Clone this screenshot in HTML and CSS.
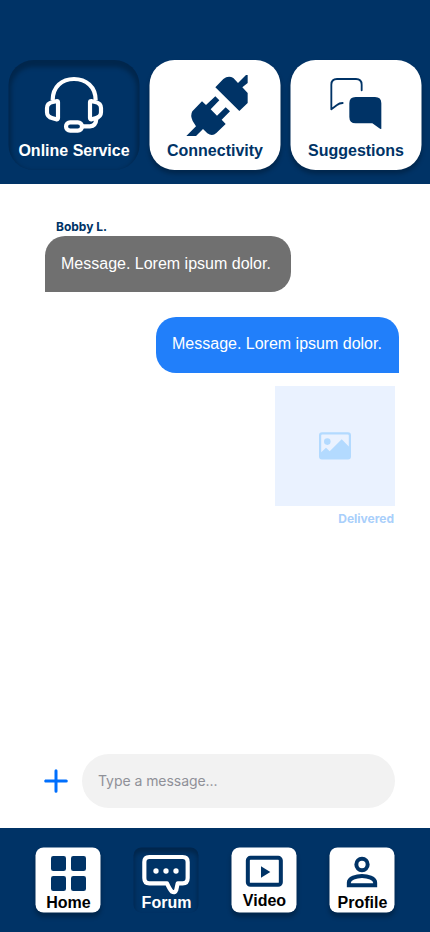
FILE: index.html
```html
<!DOCTYPE html>
<html lang="en">
<head>
<meta charset="utf-8">
<title>Online Service</title>
<link rel="stylesheet" href="styles.css">
</head>
<body>
<header class="topics">
  <a class="topic topic-active">
    <svg class="topic-icon" viewBox="25.5 30 393 246" fill="none" stroke="#fff" stroke-width="12.500" stroke-linejoin="round">
      <path d="M158 151C158 110 186 87 222 87S287 110 287 151"/>
      <path d="M172 153L158 156Q141 160 141 174V187Q141 201 158 205L169 208Q174 209 174 204V157Q174 153 170 153Z"/>
      <path d="M273 153L286 156Q303 160 303 174V187Q303 201 286 205L275 208Q270 209 270 204V157Q270 153 274 153Z"/>
      <rect x="198" y="217" width="48" height="25" rx="12.5"/>
      <path d="M248 229H270Q288 228 289 206"/>
    </svg>
    <span>Online Service</span>
  </a>
  <a class="topic">
    <svg class="topic-icon" viewBox="13.5 30 393 246" fill="#003366">
      <path d="M211 112L235 87Q250 75 265 84L279 99L303 75H308V99L292 112L308 129V159L283 183Z"/>
      <path d="M124 258L153 229L143 213Q135 196 142 184L171 154L183 165L211 139L223 151L197 178L216 197L242 172L255 184L230 209L242 222L214 249Q202 260 187 250L174 237L153 258Z"/>
    </svg>
    <span>Connectivity</span>
  </a>
  <a class="topic">
    <svg class="topic-icon" viewBox="16.5 30 393 246" fill="none" stroke="#003366" stroke-width="5.500" stroke-linecap="round" stroke-linejoin="round">
      <path d="M230 121V104Q230 87 213 87H156Q139 87 139 104V178L156 165Q163 159 173 159"/>
      <path d="M212 141H270Q289 141 289 160V236Q287 238 283 235L262 220H212Q193 220 193 201V160Q193 141 212 141Z" fill="#003366" stroke="none"/>
    </svg>
    <span>Suggestions</span>
  </a>
</header>
<main class="chat">
  <div class="sender">Bobby L.</div>
  <div class="bubble bubble-in">Message. Lorem ipsum dolor.</div>
  <div class="bubble bubble-out">Message. Lorem ipsum dolor.</div>
  <div class="photo">
    <svg width="32" height="28" viewBox="0 0 32 28">
      <path fill="#b3daff" fill-rule="evenodd" d="M3 .3H29Q32 .3 32 3.300V24.500Q32 27.500 29 27.500H3Q0 27.500 0 24.500V3.300Q0 .3 3 .3ZM3.200 2.600Q2.200 2.600 2.200 3.600V20.300L7 15.700L10.700 19.300L22.700 7.300L29.800 14.500V3.600Q29.800 2.600 28.800 2.600Z"/>
      <circle cx="8.300" cy="9.600" r="3.300" fill="#b3daff"/>
    </svg>
  </div>
  <div class="status">Delivered</div>
  <form class="composer">
    <svg width="24" height="24" viewBox="0 0 24 24" stroke="#006ffd" stroke-width="3" stroke-linecap="round"><path d="M12 1.700V22.300M1.700 12H22.300"/></svg>
    <input class="field" type="text" placeholder="Type a message..." aria-label="Message">
  </form>
</main>
<nav class="tabs">
  <a class="tab">
    <svg class="tab-icon" viewBox="46.5 82.5 195 138" fill="#003366">
      <rect x="93" y="108" width="45" height="45" rx="7"/><rect x="153" y="108" width="45" height="45" rx="7"/>
      <rect x="93" y="168" width="45" height="45" rx="7"/><rect x="153" y="168" width="45" height="45" rx="7"/>
    </svg>
    <span>Home</span>
  </a>
  <a class="tab tab-active">
    <svg class="tab-icon" viewBox="340.5 82.5 195 138" fill="none" stroke="#fff" stroke-width="12.500" stroke-linejoin="round">
      <path d="M388 111H488Q503 111 503 126V174Q503 190 488 190H473L469 209Q465 220 456 215Q449 208 441 190H388Q373 190 373 174V126Q373 111 388 111Z"/>
      <g fill="#fff" stroke="none"><circle cx="408" cy="153" r="8"/><circle cx="438" cy="153" r="8"/><circle cx="468" cy="153" r="8"/></g>
    </svg>
    <span>Forum</span>
  </a>
  <a class="tab tab-video">
    <svg class="tab-icon" viewBox="49.5 82.5 195 138" fill="#003366">
      <rect x="98.500" y="113.500" width="99" height="81" rx="8" fill="none" stroke="#003366" stroke-width="12"/>
      <path d="M138 139L166 156L138 173Z"/>
    </svg>
    <span>Video</span>
  </a>
  <a class="tab">
    <svg class="tab-icon" viewBox="343.5 82.5 195 138" fill="none" stroke="#003366" stroke-width="12">
      <circle cx="441" cy="133.500" r="17"/>
      <path d="M401.500 195.500V188C401.500 175 424 168 441 168S480.500 175 480.500 188V195.500Z"/>
    </svg>
    <span>Profile</span>
  </a>
</nav>
</body>
</html>
```
FILE: styles.css
```css
* {
  box-sizing: border-box;
}

body {
  margin: 0;
  width: 430px;
  height: 932px;
  display: flex;
  flex-direction: column;
  overflow: hidden;
  background: #fff;
  font-family: "Liberation Sans", Arial, sans-serif;
  font-size: 16px;
  line-height: 18px;
}

svg {
  display: block;
  flex: none;
  overflow: visible;
}

.topics {
  height: 184px;
  flex: none;
  display: flex;
  gap: 10px;
  padding: 60px 0 0 9px;
  background: #003366;
}

.topic {
  flex: none;
  width: 131px;
  height: 110px;
  border-radius: 25px;
  background: #fff;
  color: #003366;
  font-weight: 700;
  text-align: center;
  white-space: nowrap;
  box-shadow: 0 4px 4px rgba(0, 0, 0, 0.25);
  transform: translateX(-0.5px);
}

.topic-icon {
  width: 131px;
  height: 82px;
}

.topic-active {
  background: #003366;
  color: #fff;
  box-shadow: inset 0 4px 4px 3px rgba(0, 0, 0, 0.25);
}

.chat {
  height: 644px;
  flex: none;
  display: flex;
  flex-direction: column;
  padding: 35px 35px 20px 45px;
}

.sender {
  height: 17px;
  padding-left: 11px;
  font: 700 12px/16px Inter, sans-serif;
  color: #003366;
}

.bubble {
  height: 56px;
  padding: 19px 16px;
  color: #fff;
}

.bubble-in {
  width: 246px;
  border-radius: 20px 20px 20px 0;
  background: #707070;
}

.bubble-out {
  align-self: flex-end;
  width: 243px;
  margin: 25px -4px 0 0;
  border-radius: 20px 20px 0 20px;
  background: #217ffa;
  padding-top: 18px;
}

.photo {
  align-self: flex-end;
  width: 120px;
  height: 120px;
  margin-top: 13px;
  display: grid;
  place-items: center;
  background: #eaf2ff;
}

.status {
  align-self: flex-end;
  margin: 5px 1px 0 0;
  font: 700 12px/16px Inter, sans-serif;
  color: #a9cffb;
}

.composer {
  margin-top: auto;
  margin-left: -1px;
  display: flex;
  align-items: center;
  gap: 14px;
}

.field {
  width: 313px;
  height: 54px;
  padding: 0 16px 2px;
  border: 0;
  border-radius: 27px;
  background: #f2f2f2;
  font: 400 14px/20px Inter, sans-serif;
  letter-spacing: -0.05px;
}

.field::placeholder {
  color: #8f9098;
  opacity: 1;
}

.tabs {
  height: 104px;
  flex: none;
  display: flex;
  gap: 33px;
  padding: 20px 0 0 36px;
  background: #003366;
}

.tab {
  flex: none;
  width: 65px;
  height: 65px;
  border-radius: 8px;
  background: #fff;
  color: #000;
  font-weight: 700;
  text-align: center;
  box-shadow: 0 4px 4px rgba(0, 0, 0, 0.25);
  transform: translate(-0.5px, -0.5px);
}

.tab-icon {
  width: 65px;
  height: 46px;
}

.tab span {
  padding-left: 1px;
}

.tab-video .tab-icon {
  margin-bottom: -2px;
}

.tab-active {
  background: #003366;
  color: #fff;
  box-shadow: inset 0 4px 4px 1px rgba(0, 0, 0, 0.25);
}
```
